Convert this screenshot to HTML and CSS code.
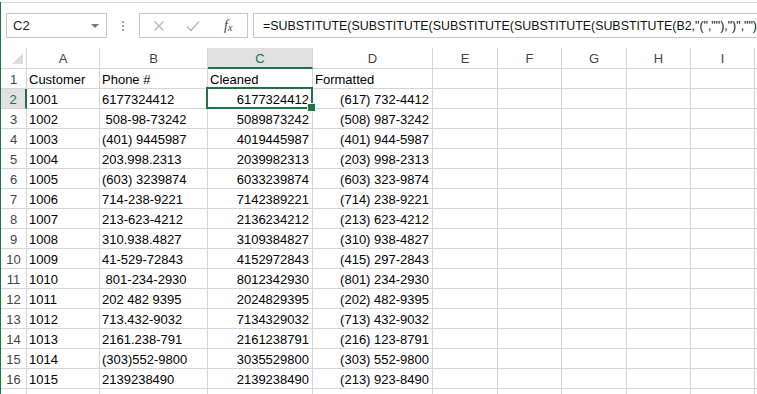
FILE: index.html
```html
<!DOCTYPE html>
<html lang="en">
<head>
    <meta charset="UTF-8">
    <title>Phone numbers - Excel</title>
    <link rel="stylesheet" href="styles.css">
</head>
<body>
<div class="app">
    <div class="formula-bar">
        <div class="name-box">
            <span>C2</span>
            <span class="caret"></span>
        </div>
        <div class="grip">
            <i></i><i></i><i></i>
        </div>
        <div class="fx-buttons">
            <svg class="icon" width="12" height="12" viewBox="0 0 12 12"><path d="M1.5 1.5 L10.5 10.5 M10.5 1.5 L1.5 10.5" stroke="#b4b4b4" stroke-width="1.3" fill="none"/></svg>
            <svg class="icon" width="14" height="12" viewBox="0 0 14 12"><path d="M1 6.5 L5 10.5 L13 1.5" stroke="#b4b4b4" stroke-width="1.4" fill="none"/></svg>
            <span class="fx">f<sub>x</sub></span>
        </div>
        <div class="formula">=SUBSTITUTE(SUBSTITUTE(SUBSTITUTE(SUBSTITUTE(SUBSTITUTE(B2,"(",""),")",""),"-",""),".","")," ","")</div>
    </div>

    <div class="sheet">
        <!-- column headers -->
        <div class="hd corner"></div>
        <div class="hd">A</div>
        <div class="hd">B</div>
        <div class="hd active-col">C</div>
        <div class="hd">D</div>
        <div class="hd">E</div>
        <div class="hd">F</div>
        <div class="hd">G</div>
        <div class="hd">H</div>
        <div class="hd">I</div>
        <div class="hd"></div>

        <div class="rh">1</div><div class="c">Customer</div><div class="c">Phone #</div><div class="c">Cleaned</div><div class="c">Formatted</div><div class="c"></div><div class="c"></div><div class="c"></div><div class="c"></div><div class="c"></div><div class="c"></div>
        <div class="rh active-row">2</div><div class="c">1001</div><div class="c">6177324412</div><div class="c num selected">6177324412</div><div class="c num">(617) 732-4412</div><div class="c"></div><div class="c"></div><div class="c"></div><div class="c"></div><div class="c"></div><div class="c"></div>
        <div class="rh">3</div><div class="c">1002</div><div class="c"> 508-98-73242</div><div class="c num">5089873242</div><div class="c num">(508) 987-3242</div><div class="c"></div><div class="c"></div><div class="c"></div><div class="c"></div><div class="c"></div><div class="c"></div>
        <div class="rh">4</div><div class="c">1003</div><div class="c">(401) 9445987</div><div class="c num">4019445987</div><div class="c num">(401) 944-5987</div><div class="c"></div><div class="c"></div><div class="c"></div><div class="c"></div><div class="c"></div><div class="c"></div>
        <div class="rh">5</div><div class="c">1004</div><div class="c">203.998.2313</div><div class="c num">2039982313</div><div class="c num">(203) 998-2313</div><div class="c"></div><div class="c"></div><div class="c"></div><div class="c"></div><div class="c"></div><div class="c"></div>
        <div class="rh">6</div><div class="c">1005</div><div class="c">(603) 3239874</div><div class="c num">6033239874</div><div class="c num">(603) 323-9874</div><div class="c"></div><div class="c"></div><div class="c"></div><div class="c"></div><div class="c"></div><div class="c"></div>
        <div class="rh">7</div><div class="c">1006</div><div class="c">714-238-9221</div><div class="c num">7142389221</div><div class="c num">(714) 238-9221</div><div class="c"></div><div class="c"></div><div class="c"></div><div class="c"></div><div class="c"></div><div class="c"></div>
        <div class="rh">8</div><div class="c">1007</div><div class="c">213-623-4212</div><div class="c num">2136234212</div><div class="c num">(213) 623-4212</div><div class="c"></div><div class="c"></div><div class="c"></div><div class="c"></div><div class="c"></div><div class="c"></div>
        <div class="rh">9</div><div class="c">1008</div><div class="c">310.938.4827</div><div class="c num">3109384827</div><div class="c num">(310) 938-4827</div><div class="c"></div><div class="c"></div><div class="c"></div><div class="c"></div><div class="c"></div><div class="c"></div>
        <div class="rh">10</div><div class="c">1009</div><div class="c">41-529-72843</div><div class="c num">4152972843</div><div class="c num">(415) 297-2843</div><div class="c"></div><div class="c"></div><div class="c"></div><div class="c"></div><div class="c"></div><div class="c"></div>
        <div class="rh">11</div><div class="c">1010</div><div class="c"> 801-234-2930</div><div class="c num">8012342930</div><div class="c num">(801) 234-2930</div><div class="c"></div><div class="c"></div><div class="c"></div><div class="c"></div><div class="c"></div><div class="c"></div>
        <div class="rh">12</div><div class="c">1011</div><div class="c">202 482 9395</div><div class="c num">2024829395</div><div class="c num">(202) 482-9395</div><div class="c"></div><div class="c"></div><div class="c"></div><div class="c"></div><div class="c"></div><div class="c"></div>
        <div class="rh">13</div><div class="c">1012</div><div class="c">713.432-9032</div><div class="c num">7134329032</div><div class="c num">(713) 432-9032</div><div class="c"></div><div class="c"></div><div class="c"></div><div class="c"></div><div class="c"></div><div class="c"></div>
        <div class="rh">14</div><div class="c">1013</div><div class="c">2161.238-791</div><div class="c num">2161238791</div><div class="c num">(216) 123-8791</div><div class="c"></div><div class="c"></div><div class="c"></div><div class="c"></div><div class="c"></div><div class="c"></div>
        <div class="rh">15</div><div class="c">1014</div><div class="c">(303)552-9800</div><div class="c num">3035529800</div><div class="c num">(303) 552-9800</div><div class="c"></div><div class="c"></div><div class="c"></div><div class="c"></div><div class="c"></div><div class="c"></div>
        <div class="rh">16</div><div class="c">1015</div><div class="c">2139238490</div><div class="c num">2139238490</div><div class="c num">(213) 923-8490</div><div class="c"></div><div class="c"></div><div class="c"></div><div class="c"></div><div class="c"></div><div class="c"></div>
        <!-- row 17 only shows its top edge -->
        <div class="rh"></div><div class="c"></div><div class="c"></div><div class="c"></div><div class="c"></div><div class="c"></div><div class="c"></div><div class="c"></div><div class="c"></div><div class="c"></div><div class="c"></div>
    </div>
</div>
</body>
</html>
```

FILE: styles.css
```css
* {
    margin: 0;
    padding: 0;
    box-sizing: border-box;
}
html, body {
    width: 757px;
    height: 394px;
    overflow: hidden;
    background: #fff;
    font-family: "Liberation Sans", Arial, sans-serif;
    color: #000;
}
/* green window edge on the left */
.app {
    height: 394px;
    border-left: 1px solid #217346;
}

/* name box + formula bar */
.formula-bar {
    margin-top: 2px;
    border-top: 1px solid #d8d8d8;
    padding: 10px 0 10px 5px;
    height: 46px;
    display: flex;
    align-items: stretch;
}
.name-box {
    width: 101px;
    height: 25px;
    border: 1px solid #c6c6c6;
    display: flex;
    align-items: center;
    justify-content: space-between;
    padding: 0 6px 0 6px;
    font-size: 13px;
    color: #222;
}
.caret {
    width: 0;
    height: 0;
    border-left: 4px solid transparent;
    border-right: 4px solid transparent;
    border-top: 4px solid #777;
    margin-right: 1px;
}
.grip {
    width: 32px;
    display: flex;
    flex-direction: column;
    align-items: center;
    justify-content: center;
    gap: 2px;
}
.grip i {
    display: block;
    width: 2px;
    height: 2px;
    background: #a0a0a0;
}
.fx-buttons {
    width: 109px;
    height: 25px;
    border: 1px solid #c6c6c6;
    display: flex;
    align-items: center;
    padding-left: 13px;
}
.fx-buttons .icon:nth-child(1) {
    margin-right: 21px;
}
.fx-buttons .icon:nth-child(2) {
    margin-right: 24px;
}
.fx {
    font-family: "Liberation Serif", serif;
    font-style: italic;
    font-size: 14px;
    color: #444;
}
.fx sub {
    font-size: 10px;
    vertical-align: -1px;
}
.formula {
    flex: 1;
    margin-left: 5px;
    height: 25px;
    border: 1px solid #c6c6c6;
    border-right: none;
    padding: 4px 0 0 9px;
    font-size: 12.4px;
    line-height: 16px;
    white-space: nowrap;
    overflow: hidden;
    color: #111;
}

/* worksheet grid */
.sheet {
    display: grid;
    grid-template-columns: 26px 73px 108px 105px 120px 65px 64px 65px 64px 64px 64px;
    grid-template-rows: 21px;
    grid-auto-rows: 20px;
    overflow: hidden;
    font-size: 13px;
}
.hd, .rh, .c {
    border-right: 1px solid #d4d4d4;
    border-bottom: 1px solid #d4d4d4;
    white-space: pre;
    line-height: 18px;
}
.hd {
    text-align: center;
    color: #444;
    padding-top: 2px;
    font-size: 13px;
}
.corner {
    position: relative;
}
.corner::after {
    content: "";
    position: absolute;
    right: 3px;
    bottom: 4px;
    width: 0;
    height: 0;
    border-left: 11px solid transparent;
    border-bottom: 11px solid #dcdcdc;
}
.rh {
    text-align: center;
    color: #444;
    padding-top: 2px;
    font-size: 13px;
}
.active-col {
    background: #e1e1e1;
    color: #217346;
    border-bottom: 2px solid #217346;
}
.active-row {
    background: #e1e1e1;
    color: #217346;
    border-right: 2px solid #217346;
}
.c {
    padding: 2px 0 0 2px;
}
.c.num {
    text-align: right;
    padding-right: 3px;
}
/* active cell outline and fill handle */
.selected {
    position: relative;
}
.selected::before {
    content: "";
    position: absolute;
    left: -2px;
    top: -2px;
    right: -1px;
    bottom: -1px;
    border: 2px solid #217346;
}
.selected::after {
    content: "";
    position: absolute;
    right: -4px;
    bottom: -4px;
    width: 7px;
    height: 7px;
    background: #217346;
    border: 1px solid #fff;
}
```
